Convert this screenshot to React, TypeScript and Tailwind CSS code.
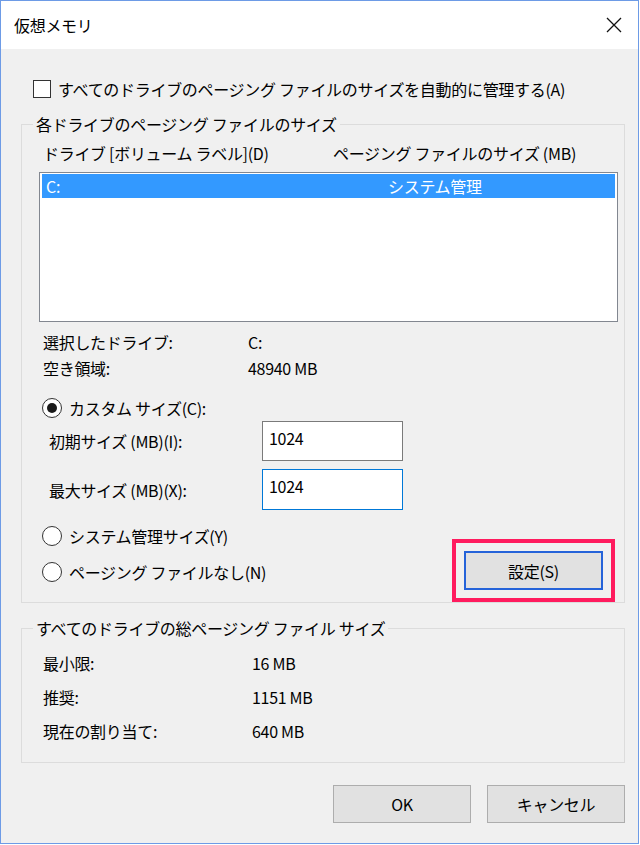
import { ReactNode } from 'react'

function Radio({ checked = false }: { checked?: boolean }) {
  return (
    <span className="flex h-[20px] w-[20px] shrink-0 items-center justify-center rounded-full border border-[#333] bg-white">
      {checked && <span className="h-[10px] w-[10px] rounded-full bg-[#1a1a1a]" />}
    </span>
  )
}

function RadioRow({ checked, children }: { checked?: boolean; children: ReactNode }) {
  return (
    <div className="flex h-[24px] items-center gap-[7px] pl-[3px]">
      <Radio checked={checked} />
      <span className="leading-[24px]">{children}</span>
    </div>
  )
}

function Button({ children, className = '' }: { children: ReactNode; className?: string }) {
  return (
    <div className={`flex items-center justify-center bg-[#e1e1e1] leading-[24px] ${className}`}>
      {children}
    </div>
  )
}

const totals = [
  { label: '最小限:', value: '16 MB' },
  { label: '推奨:', value: '1151 MB' },
  { label: '現在の割り当て:', value: '640 MB' },
]

export default function App() {
  return (
    <div className="h-[845px] w-[640px] bg-white font-['Noto_Sans_CJK_JP','Noto_Sans',sans-serif] text-[16px] tracking-[-0.3px] text-black">
      <div className="flex h-[844px] w-[639px] flex-col border border-[#6d9be6] bg-[#f0f0f0]">
        {/* title bar */}
        <div className="flex h-[48px] shrink-0 items-center justify-between bg-white pl-[13px] pr-[16px]">
          <span className="leading-[24px]">仮想メモリ</span>
          <svg width="16" height="16" viewBox="0 0 16 16" fill="none" stroke="#111" strokeWidth="1.3">
            <path d="M1 1L15 15M15 1L1 15" />
          </svg>
        </div>

        <div className="flex flex-col pl-[20px] pr-[13px]">
          <label className="mt-[30px] flex h-[20px] items-center gap-[7px] pl-[12px]">
            <span className="h-[18px] w-[18px] shrink-0 border border-[#333] bg-white" />
            <span className="leading-[24px]">すべてのドライブのページング ファイルのサイズを自動的に管理する(A)</span>
          </label>

          <fieldset className="mt-[13px] border border-[#dcdcdc]">
            <legend className="ml-[11px] px-[3px] leading-[24px]">各ドライブのページング ファイルのサイズ</legend>
            <div className="flex flex-col pl-[17px]">
              <div className="mt-[5px] flex pl-[4px] leading-[24px]">
                <span className="w-[290px]">ドライブ [ボリューム ラベル](D)</span>
                <span>ページング ファイルのサイズ (MB)</span>
              </div>

              <div className="mt-[7px] h-[150px] w-[579px] border border-[#828790] bg-white px-[2px] pt-[1px]">
                <div className="flex h-[24px] items-center bg-[#3399ff] text-white">
                  <span className="w-[346px] pl-[4px]">C:</span>
                  <span>システム管理</span>
                </div>
              </div>

              <div className="mt-[7px] flex pl-[4px] leading-[26px]">
                <span className="w-[205px]">選択したドライブ:</span>
                <span>C:</span>
              </div>
              <div className="flex pl-[4px] leading-[26px]">
                <span className="w-[205px]">空き領域:</span>
                <span>48940 MB</span>
              </div>

              <div className="mt-[15px]">
                <RadioRow checked>カスタム サイズ(C):</RadioRow>
              </div>

              <div className="mt-[1px] flex items-center">
                <span className="w-[223px] pl-[10px] leading-[24px]">初期サイズ (MB)(I):</span>
                <div className="h-[40px] w-[141px] border border-[#7a7a7a] bg-white pl-[6px] pt-[4px] leading-[24px]">1024</div>
              </div>
              <div className="mt-[8px] flex items-center">
                <span className="w-[223px] pl-[10px] leading-[24px]">最大サイズ (MB)(X):</span>
                <div className="h-[41px] w-[141px] border border-[#0078d7] bg-white pl-[6px] pt-[4px] leading-[24px]">1024</div>
              </div>

              <div className="mt-[14px] flex">
                <div className="flex w-[413px] flex-col gap-[12px]">
                  <RadioRow>システム管理サイズ(Y)</RadioRow>
                  <RadioRow>ページング ファイルなし(N)</RadioRow>
                </div>
                <div className="mt-[15px] border-4 border-[#ff1b5e] p-[8px]">
                  <Button className="h-[39px] w-[139px] border-2 border-[#2563d9]">設定(S)</Button>
                </div>
              </div>
            </div>
          </fieldset>

          <fieldset className="mt-[13px] border border-[#dcdcdc]">
            <legend className="ml-[11px] px-[3px] leading-[24px]">すべてのドライブの総ページング ファイル サイズ</legend>
            <div className="flex flex-col pb-[14px] pl-[21px] pt-[6px]">
              {totals.map((t) => (
                <div key={t.label} className="flex leading-[34px]">
                  <span className="w-[209px]">{t.label}</span>
                  <span>{t.value}</span>
                </div>
              ))}
            </div>
          </fieldset>

          <div className="mt-[22px] flex justify-end gap-[16px]">
            <Button className="h-[38px] w-[138px] border border-[#adadad]">OK</Button>
            <Button className="h-[38px] w-[138px] border border-[#adadad]">キャンセル</Button>
          </div>
        </div>
      </div>
    </div>
  )
}
